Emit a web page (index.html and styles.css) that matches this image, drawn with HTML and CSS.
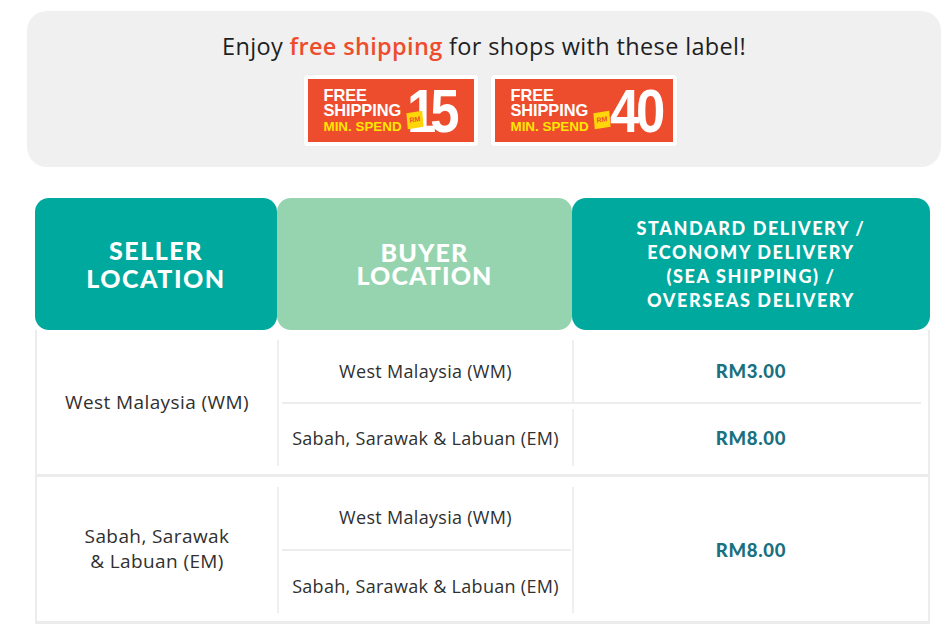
FILE: index.html
```html
<!DOCTYPE html>
<html lang="en">
<head>
<meta charset="utf-8">
<title>Free shipping</title>
<link rel="stylesheet" href="styles.css">
</head>
<body>
<div class="page">
  <section class="promo">
    <h1 class="promo-title">Enjoy <span class="hl">free shipping</span> for shops with these label!</h1>
    <div class="badges">
      <div class="badge">
        <div class="badge-inner badge-15">
          <div class="badge-text">
            <span class="bt-white">FREE</span>
            <span class="bt-white">SHIPPING</span>
            <span class="bt-yellow">MIN. SPEND</span>
          </div>
          <div class="badge-num">
            <span class="rm">RM</span>
            <span class="num num-15">15</span>
          </div>
        </div>
      </div>
      <div class="badge">
        <div class="badge-inner badge-40">
          <div class="badge-text">
            <span class="bt-white">FREE</span>
            <span class="bt-white">SHIPPING</span>
            <span class="bt-yellow">MIN. SPEND</span>
          </div>
          <div class="badge-num">
            <span class="rm">RM</span>
            <span class="num num-40">40</span>
          </div>
        </div>
      </div>
    </div>
  </section>

  <section class="rates">
    <div class="thead">
      <div class="th th-seller">SELLER<br>LOCATION</div>
      <div class="th th-buyer">BUYER<br>LOCATION</div>
      <div class="th th-delivery">STANDARD DELIVERY /<br>ECONOMY DELIVERY<br>(SEA SHIPPING) /<br>OVERSEAS DELIVERY</div>
    </div>
    <div class="tbody">
      <div class="group">
        <div class="seller">West Malaysia (WM)</div>
        <div class="dest">
          <div class="line line-top">
            <div class="buyer">West Malaysia (WM)</div>
            <div class="price">RM3.00</div>
          </div>
          <div class="rule rule-wide"></div>
          <div class="line line-bottom">
            <div class="buyer">Sabah, Sarawak &amp; Labuan (EM)</div>
            <div class="price">RM8.00</div>
          </div>
        </div>
      </div>
      <div class="group group-split">
        <div class="seller">Sabah, Sarawak<br>&amp; Labuan (EM)</div>
        <div class="buyers">
          <div class="buyer buyer-top">West Malaysia (WM)</div>
          <div class="rule rule-narrow"></div>
          <div class="buyer buyer-bottom">Sabah, Sarawak &amp; Labuan (EM)</div>
        </div>
        <div class="price">RM8.00</div>
      </div>
    </div>
  </section>
</div>
</body>
</html>
```

FILE: styles.css
```css
* { box-sizing: border-box; }

body {
  margin: 0;
  background: #ffffff;
  font-family: "Open Sans", "Noto Sans", sans-serif;
  color: #303030;
}

.page {
  padding-top: 11px;
  width: 947px;
}

/* ---------- promo box ---------- */
.promo {
  margin-left: 27px;
  width: 914px;
  height: 156px;
  background: #f0f0f0;
  border-radius: 20px;
  padding-top: 19px;
  display: flex;
  flex-direction: column;
  align-items: center;
}

.promo-title {
  margin: 0;
  font-family: "Open Sans", sans-serif;
  font-size: 23.5px;
  line-height: 32px;
  font-weight: 400;
  color: #1f1f1f;
  letter-spacing: 0.35px;
}

.promo-title .hl {
  color: #ee4d2d;
  font-weight: 600;
}

.badges {
  display: flex;
  gap: 13px;
  margin-top: 13px;
  margin-left: 12px;
}

.badge {
  background: #ffffff;
  padding: 4px;
  border-radius: 3px;
  box-shadow: 0 0 2px rgba(0, 0, 0, 0.06);
}

.badge-inner {
  background: #ee4d2d;
  height: 63px;
  display: flex;
  align-items: center;
  padding-left: 16px;
}

.badge-15 { width: 166px; }
.badge-40 { width: 178px; }

.badge-text {
  display: flex;
  flex-direction: column;
  width: 79px;
  white-space: nowrap;
  font-family: "Liberation Sans", Arial, sans-serif;
  font-weight: 700;
  line-height: 15.5px;
  padding-top: 1px;
}

.bt-white {
  color: #ffffff;
  font-size: 16.4px;
  letter-spacing: -0.1px;
}

.bt-yellow {
  color: #ffe600;
  font-size: 13.4px;
  letter-spacing: 0;
}

.badge-num {
  display: flex;
  align-self: stretch;
  align-items: center;
  margin-left: 4px;
}

.rm {
  position: relative;
  z-index: 1;
  align-self: flex-end;
  margin-bottom: 14px;
  width: 16px;
  height: 16px;
  background: #ffd60a;
  color: #ee4d2d;
  font-family: "Liberation Sans", Arial, sans-serif;
  font-weight: 700;
  font-size: 7px;
  line-height: 16px;
  text-align: center;
  transform: rotate(-9deg) skewX(-4deg);
}

.num {
  font-family: "Liberation Sans", Arial, sans-serif;
  font-weight: 700;
  font-size: 62px;
  line-height: 62px;
  color: #ffffff;
  display: inline-block;
  transform: scaleX(0.85);
  transform-origin: left center;
}

.num-15 {
  letter-spacing: -7px;
  margin-left: -16px;
}

.num-40 {
  letter-spacing: -4px;
  margin-left: 0;
}

/* ---------- rates table ---------- */
.rates {
  margin-top: 31px;
  margin-left: 35px;
  width: 895px;
}

.thead {
  display: grid;
  grid-template-columns: 242px 295px 358px;
  height: 132px;
}

.th {
  border-radius: 14px;
  color: #ffffff;
  display: flex;
  align-items: center;
  justify-content: center;
  text-align: center;
  font-family: "Lato", sans-serif;
  font-weight: 900;
}

.th-seller {
  background: #00a99e;
  font-size: 25px;
  line-height: 28px;
  letter-spacing: 1.5px;
}

.th-buyer {
  background: #95d4ae;
  font-size: 25px;
  line-height: 23.5px;
  letter-spacing: 1.1px;
}

.th-delivery {
  background: #00a99e;
  font-size: 18px;
  line-height: 24px;
  letter-spacing: 1.6px;
}

.tbody {
  border-left: 2px solid #ececec;
  border-right: 2px solid #ececec;
}

.group {
  display: grid;
  grid-template-columns: 242px 1fr;
  padding: 10px 0 8px;
  border-bottom: 3px solid #ececec;
}

.group-split {
  grid-template-columns: 242px 295px 1fr;
}

.seller {
  border-right: 2px solid #efefef;
  display: flex;
  align-items: center;
  justify-content: center;
  text-align: center;
  font-size: 19px;
  letter-spacing: 0.4px;
  line-height: 25px;
  padding-bottom: 2px;
}

.dest {
  display: flex;
  flex-direction: column;
}

.line {
  display: grid;
  grid-template-columns: 295px 1fr;
  height: 62px;
}

.line-top { padding-bottom: 5px; }
.line-bottom { padding-top: 5px; }

.line-top .buyer,
.line-top .price { margin-bottom: -5px; }

.buyer {
  display: flex;
  align-items: center;
  justify-content: center;
  text-align: center;
  font-size: 18px;
  letter-spacing: 0.3px;
  height: 62px;
}

.line .buyer {
  border-right: 2px solid #efefef;
  height: auto;
}

.buyers {
  display: flex;
  flex-direction: column;
  border-right: 2px solid #efefef;
}

.buyer-top { padding-bottom: 2px; }
.buyer-bottom { padding-top: 8px; }

.price {
  display: flex;
  align-items: center;
  justify-content: center;
  font-family: "Lato", sans-serif;
  font-size: 18.5px;
  font-weight: 900;
  color: #19707f;
  letter-spacing: 0.7px;
}

.rule {
  height: 2px;
  background: #ededed;
}

.rule-wide {
  margin: 0 7px 0 3px;
}

.rule-narrow {
  margin: 0 1px 0 3px;
}
```
